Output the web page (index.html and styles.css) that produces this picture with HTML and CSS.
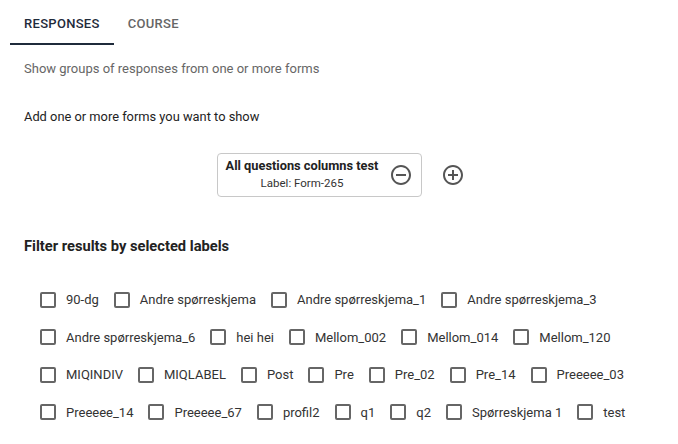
FILE: index.html
```html
<!DOCTYPE html>
<html lang="en">
<head>
<meta charset="utf-8">
<link rel="stylesheet" href="styles.css">
</head>
<body>
<nav class="tabs">
  <div class="tab active">Responses</div>
  <div class="tab">Course</div>
</nav>
<main class="content">
  <p class="hint">Show groups of responses from one or more forms</p>
  <p class="lead">Add one or more forms you want to show</p>
  <div class="forms">
    <div class="form-card">
      <div class="form-info">
        <div class="form-title">All questions columns test</div>
        <div class="form-label">Label: Form-265</div>
      </div>
      <svg class="icon" viewBox="0 0 24 24"><path d="M7 11v2h10v-2H7zm5-9C6.48 2 2 6.48 2 12s4.48 10 10 10 10-4.48 10-10S17.52 2 12 2zm0 18c-4.41 0-8-3.590-8-8s3.59-8 8-8 8 3.59 8 8-3.59 8-8 8z"/></svg>
    </div>
    <svg class="icon add" viewBox="0 0 24 24"><path d="M13 7h-2v4H7v2h4v4h2v-4h4v-2h-4V7zm-1-5C6.48 2 2 6.48 2 12s4.48 10 10 10 10-4.48 10-10S17.52 2 12 2zm0 18c-4.41 0-8-3.59-8-8s3.59-8 8-8 8 3.59 8 8-3.59 8-8 8z"/></svg>
  </div>
  <h2 class="filter-title">Filter results by selected labels</h2>
  <div class="labels">
    <label class="item"><span class="box"></span>90-dg</label>
    <label class="item"><span class="box"></span>Andre spørreskjema</label>
    <label class="item"><span class="box"></span>Andre spørreskjema_1</label>
    <label class="item"><span class="box"></span>Andre spørreskjema_3</label>
    <label class="item"><span class="box"></span>Andre spørreskjema_6</label>
    <label class="item"><span class="box"></span>hei hei</label>
    <label class="item"><span class="box"></span>Mellom_002</label>
    <label class="item"><span class="box"></span>Mellom_014</label>
    <label class="item"><span class="box"></span>Mellom_120</label>
    <label class="item"><span class="box"></span>MIQINDIV</label>
    <label class="item"><span class="box"></span>MIQLABEL</label>
    <label class="item"><span class="box"></span>Post</label>
    <label class="item"><span class="box"></span>Pre</label>
    <label class="item"><span class="box"></span>Pre_02</label>
    <label class="item"><span class="box"></span>Pre_14</label>
    <label class="item"><span class="box"></span>Preeeee_03</label>
    <label class="item"><span class="box"></span>Preeeee_14</label>
    <label class="item"><span class="box"></span>Preeeee_67</label>
    <label class="item"><span class="box"></span>profil2</label>
    <label class="item"><span class="box"></span>q1</label>
    <label class="item"><span class="box"></span>q2</label>
    <label class="item"><span class="box"></span>Spørreskjema 1</label>
    <label class="item"><span class="box"></span>test</label>
  </div>
</main>
</body>
</html>
```
FILE: styles.css
```css
html, body {
  margin: 0;
  padding: 0;
  background: #fff;
}
body {
  font-family: Roboto, "Liberation Sans", sans-serif;
  color: #222;
  width: 678px;
  height: 444px;
  overflow: hidden;
}
.tabs {
  display: flex;
  margin-left: 10px;
  height: 45px;
}
.tab {
  padding: 0 14px;
  height: 45px;
  box-sizing: border-box;
  display: flex;
  align-items: center;
  padding-top: 2px;
  font-size: 13px;
  font-weight: 500;
  text-transform: uppercase;
  letter-spacing: 0.3px;
  color: #666;
}
.tab.active {
  color: #1f2b3b;
  border-bottom: 2px solid #1f2b3b;
  padding-top: 4px;
}
.content {
  padding: 0 24px;
}
.hint {
  margin: 16px 0 0;
  font-size: 13px;
  line-height: 16px;
  color: #666;
}
.lead {
  margin: 32px 0 0;
  font-size: 12.85px;
  line-height: 16px;
  color: #222;
}
.forms {
  margin-top: 28px;
  display: flex;
  justify-content: center;
  align-items: center;
  gap: 19px;
  padding-left: 4px;
}
.form-card {
  display: flex;
  align-items: center;
  gap: 11px;
  height: 44px;
  box-sizing: border-box;
  padding: 0 8px;
  border: 1px solid #c8c8c8;
  border-radius: 4px;
}
.form-info {
  text-align: center;
}
.form-title {
  font-size: 12.8px;
  font-weight: 700;
  line-height: 16px;
  color: #222;
}
.form-label {
  font-size: 11.5px;
  line-height: 18px;
  color: #333;
}
.icon {
  width: 24px;
  height: 24px;
  fill: #555;
  display: block;
}
.filter-title {
  margin: 40px 0 0;
  font-size: 14.7px;
  font-weight: 700;
  line-height: 18px;
  color: #222;
}
.labels {
  margin-top: 26px;
  padding-left: 16px;
  width: 620px;
  display: flex;
  flex-wrap: wrap;
}
.item {
  display: flex;
  align-items: center;
  gap: 10px;
  height: 37.5px;
  margin-right: 15px;
  font-size: 13px;
  color: #333;
}
.box {
  width: 16px;
  height: 16px;
  box-sizing: border-box;
  border: 2px solid #666;
  border-radius: 2px;
  flex: none;
}
```
